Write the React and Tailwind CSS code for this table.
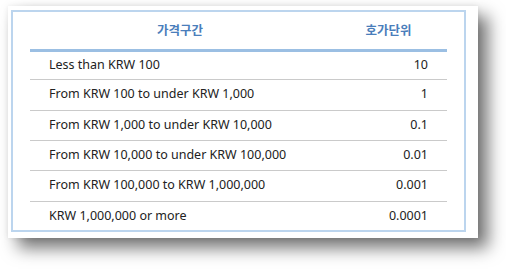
const rows = [
  ["Less than KRW 100", "10", "h-[29px] border-b border-[#cacaca]"],
  ["From KRW 100 to under KRW 1,000", "1", "h-[31px] border-b border-[#cacaca]"],
  ["From KRW 1,000 to under KRW 10,000", "0.1", "h-[30px] border-b border-[#cacaca]"],
  ["From KRW 10,000 to under KRW 100,000", "0.01", "h-[30px] border-b border-[#cacaca]"],
  ["From KRW 100,000 to KRW 1,000,000", "0.001", "h-[31px] border-b border-[#cacaca]"],
  ["KRW 1,000,000 or more", "0.0001", "h-[30px]"],
];

export default function App() {
  return (
    <div
      className="w-[506px] h-[269px] bg-white pt-[6px] pl-[8px]"
      style={{ fontFamily: '"Noto Sans", "Noto Sans CJK KR", sans-serif' }}
    >
      <div className="w-[470px] h-[232px] bg-white pt-[4px] pl-[3px] shadow-[0_0_6px_rgba(0,0,0,0.08),10px_10px_16px_rgba(0,0,0,0.55)]">
        <div className="w-[455px] h-[222px] border-2 border-[#bcd5ee] pl-[17px]">
          <table className="w-[417px] border-collapse text-[12.5px] text-[#222]">
            <thead>
              <tr className="h-[38px] border-b-[3px] border-[#9bbfe3]">
                <th className="w-[300px] text-center font-semibold text-[#4a7ebb] text-[12.5px] font-['Noto_Sans_CJK_KR']">가격구간</th>
                <th className="text-center font-semibold text-[#4a7ebb] text-[12.5px] font-['Noto_Sans_CJK_KR']">호가단위</th>
              </tr>
            </thead>
            <tbody>
              {rows.map(([range, unit, cls], i) => (
                <tr key={i} className={cls}>
                  <td className="pl-[19px]">{range}</td>
                  <td className="pr-[19px] text-right">{unit}</td>
                </tr>
              ))}
            </tbody>
          </table>
        </div>
      </div>
    </div>
  );
}
